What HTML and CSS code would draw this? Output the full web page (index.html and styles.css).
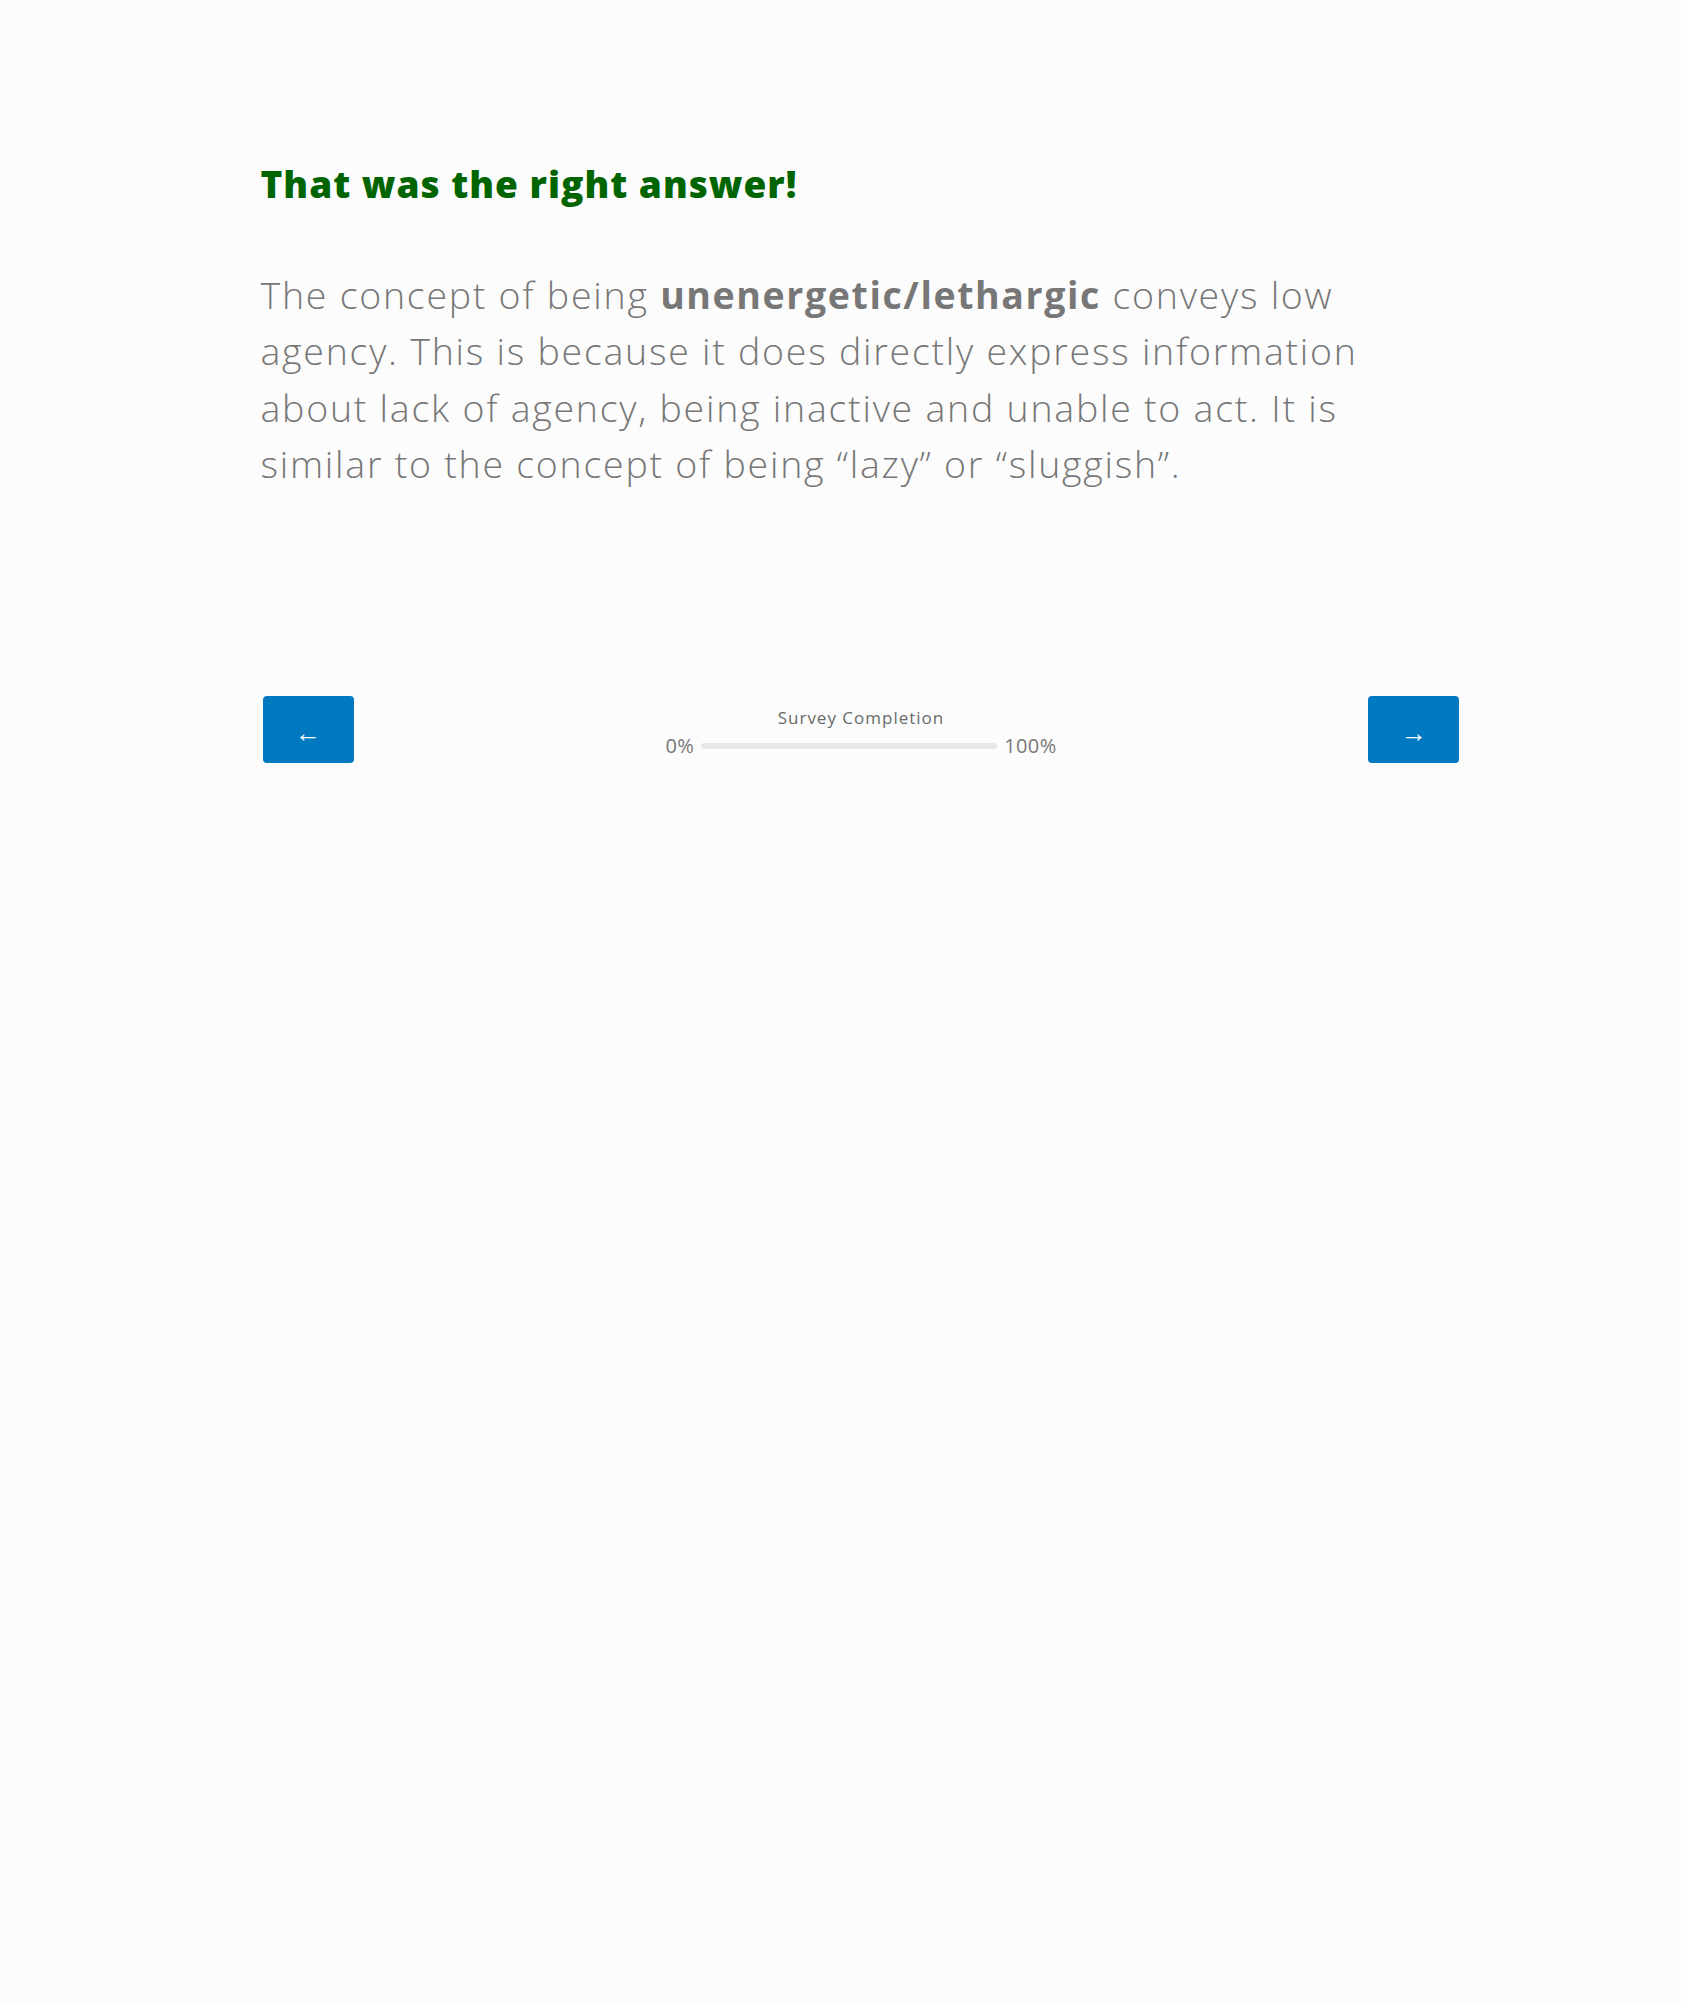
FILE: index.html
```html
<!DOCTYPE html>
<html lang="en">
<head>
<meta charset="utf-8">
<title>Survey</title>
<link rel="stylesheet" href="styles.css">
</head>
<body>
<main class="page">
  <h1 class="result">That was the right answer!</h1>
  <p class="explain">The concept of being <strong>unenergetic/lethargic</strong> conveys low agency. This is because it does directly express information about lack of agency, being inactive and unable to act. It is similar to the concept of being “lazy” or “sluggish”.</p>
  <nav class="controls">
    <button class="nav-btn" type="button" aria-label="Previous">←</button>
    <div class="progress">
      <div class="progress-title">Survey Completion</div>
      <div class="progress-row">
        <span class="progress-end">0%</span>
        <span class="progress-track"><span class="progress-fill"></span></span>
        <span class="progress-end">100%</span>
      </div>
    </div>
    <button class="nav-btn" type="button" aria-label="Next">→</button>
  </nav>
</main>
</body>
</html>
```

FILE: styles.css
```css
html, body {
  margin: 0;
  padding: 0;
  background: #fcfcfc;
}
body {
  font-family: "Open Sans", "Liberation Sans", sans-serif;
  color: #777777;
}
.page {
  width: 1200px;
  margin: 0 auto;
  padding: 160px 0 0 40px;
}
.result {
  margin: 0;
  font-size: 37px;
  line-height: 48px;
  font-weight: 800;
  letter-spacing: 1px;
  color: #006400;
}
.explain {
  margin: 59px 0 0 0;
  width: 1150px;
  font-size: 37.5px;
  line-height: 56.25px;
  font-weight: 300;
  letter-spacing: 1.75px;
  color: #777777;
}
.explain strong {
  font-weight: 700;
  letter-spacing: 1.6px;
}
.controls {
  margin-top: 204px;
  display: flex;
  align-items: center;
  justify-content: space-between;
  padding: 0 1px 0 2px;
}
.nav-btn {
  width: 91px;
  height: 67px;
  border: none;
  border-radius: 4px;
  background: #0079c1;
  color: #ffffff;
  font-family: "Liberation Sans", sans-serif;
  font-size: 26px;
  line-height: 26px;
  padding: 6px 0 0 0;
  cursor: pointer;
}
.progress {
  display: flex;
  flex-direction: column;
  align-items: center;
  gap: 4px;
  padding-top: 6px;
}
.progress-title {
  font-size: 17px;
  line-height: 22px;
  letter-spacing: 1px;
  color: #6a6a6a;
}
.progress-row {
  display: flex;
  align-items: center;
  gap: 7px;
}
.progress-end {
  font-size: 20px;
  line-height: 26px;
  font-weight: 500;
  letter-spacing: 0.4px;
  color: #777777;
}
.progress-track {
  display: block;
  width: 296px;
  height: 6px;
  border-radius: 3px;
  background: #e8e8e8;
  overflow: hidden;
}
.progress-fill {
  display: block;
  width: 0;
  height: 100%;
  background: #0079c1;
}
```
